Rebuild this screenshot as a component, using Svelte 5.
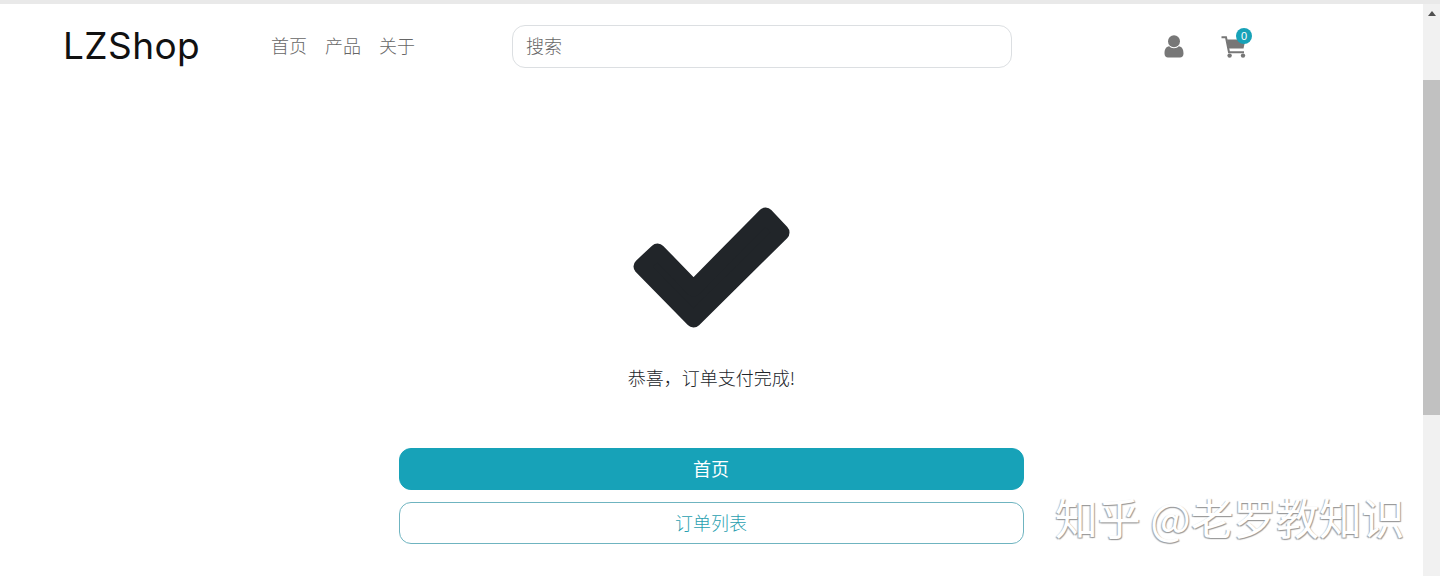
<script>
	const links = ['首页', '产品', '关于'];
	let cartCount = 0;
</script>

<div class="window">
	<div class="topline"></div>
	<div class="frame">
		<div class="page">
			<header>
				<div class="logo">LZShop</div>
				<nav>
					{#each links as link}
						<a href="#top">{link}</a>
					{/each}
				</nav>
				<input class="search" type="text" placeholder="搜索" />
				<div class="icons">
					<svg class="user" viewBox="0 0 20 23" aria-hidden="true">
						<circle cx="10" cy="6.2" r="6" />
						<path d="M0.5 18.5C0.5 14 2 11.7 5.2 11.2 7 13.8 13 13.8 14.8 11.2 18 11.7 19.5 14 19.5 18.5 19.5 21.3 18 22.5 16 22.5H4C2 22.5 0.5 21.3 0.5 18.5Z" />
					</svg>
					<div class="cart">
						<svg viewBox="0 0 26 23" aria-hidden="true">
							<path class="handle" d="M0.5 2.2H5L8 17.2H23" />
							<path d="M6 4.5H24.5L22.5 13.5H7.6Z" />
							<circle cx="8.6" cy="20.6" r="2.2" />
							<circle cx="22" cy="20.6" r="2.2" />
						</svg>
						<span class="badge">{cartCount}</span>
					</div>
				</div>
			</header>

			<main>
				<svg class="check" viewBox="0 0 162 162" aria-hidden="true">
					<path d="M62.5 132.5L150.5 45.5 134.5 28.5 62.5 101.5 26.5 64.5 10.5 79.5Z" />
				</svg>
				<p>恭喜，订单支付完成!</p>
				<button class="primary">首页</button>
				<button class="outline">订单列表</button>
			</main>

			<div class="watermark">知乎 @老罗教知识</div>
		</div>

		<div class="scrollbar">
			<div class="arrow"></div>
			<div class="thumb"></div>
		</div>
	</div>
</div>

<style>
	:global(body) {
		overflow: hidden;
		background: #fff;
	}

	.window {
		height: 576px;
		display: flex;
		flex-direction: column;
		font-family: "Noto Sans CJK SC", "Liberation Sans", sans-serif;
		color: #212529;
	}

	.topline {
		height: 4px;
		background: #e9e9e9;
		flex: none;
	}

	.frame {
		flex: 1;
		display: flex;
		min-height: 0;
	}

	.page {
		flex: 1;
		position: relative;
		min-width: 0;
	}

	header {
		display: flex;
		align-items: center;
		height: 85px;
		padding-left: 63px;
	}

	.logo {
		font-family: "Inter", sans-serif;
		font-size: 37px;
		letter-spacing: 0.4px;
		color: #111;
		width: 208px;
		flex: none;
		padding-bottom: 3px;
	}

	nav {
		display: flex;
		gap: 18px;
		width: 241px;
		flex: none;
		padding-bottom: 4px;
	}

	nav a {
		font-size: 18px;
		font-weight: 300;
		color: #666;
		text-decoration: none;
	}

	.search {
		width: 500px;
		height: 43px;
		box-sizing: border-box;
		border: 1px solid #dcdfe2;
		border-radius: 13px;
		padding: 0 13px 3px;
		font: 300 18px "Noto Sans CJK SC", sans-serif;
		flex: none;
		outline: none;
	}

	.search::placeholder {
		color: #666;
		opacity: 1;
	}

	.icons {
		display: flex;
		align-items: center;
		gap: 37px;
		margin-left: 152px;
		fill: #777;
	}

	.user {
		width: 20px;
		height: 23px;
		display: block;
	}

	.cart {
		position: relative;
		width: 26px;
		height: 23px;
	}

	.cart svg {
		display: block;
		width: 26px;
		height: 23px;
	}

	.handle {
		fill: none;
		stroke: #777;
		stroke-width: 2;
	}

	.badge {
		position: absolute;
		top: -7px;
		left: 15px;
		width: 16px;
		height: 16px;
		border-radius: 50%;
		background: #17a2b8;
		color: #fff;
		font: 11px/16px "Liberation Sans", sans-serif;
		text-align: center;
	}

	main {
		display: flex;
		flex-direction: column;
		align-items: center;
		padding-top: 98px;
	}

	.check {
		width: 162px;
		height: 162px;
		fill: #212529;
		stroke: #212529;
		stroke-width: 16;
		stroke-linejoin: round;
		display: block;
	}

	p {
		margin: 15px 0 57px;
		font-size: 18px;
		font-weight: 300;
		line-height: 27px;
	}

	button {
		width: 625px;
		height: 42px;
		box-sizing: border-box;
		border-radius: 12px;
		font: 400 18px "Noto Sans CJK SC", sans-serif;
		padding: 0 1px 3px 0;
	}

	.primary {
		background: #17a2b8;
		border: 1px solid #17a2b8;
		color: #fff;
		margin-bottom: 12px;
	}

	.outline {
		background: #fff;
		border: 1px solid #6fb4c0;
		color: #2a9fb0;
		font-weight: 300;
	}

	.watermark {
		position: absolute;
		left: 1055px;
		top: 485px;
		font-size: 42.8px;
		line-height: 54px;
		font-weight: 400;
		white-space: nowrap;
		color: #fff;
		text-shadow: 1px 1px 1px #999, -1px 1px 1px #aaa;
	}

	.scrollbar {
		width: 17px;
		flex: none;
		background: #f1f1f1;
		display: flex;
		flex-direction: column;
	}

	.arrow {
		height: 76px;
		display: flex;
		justify-content: center;
		padding-top: 7px;
		box-sizing: border-box;
	}

	.arrow::before {
		content: "";
		width: 0;
		height: 0;
		border-left: 4px solid transparent;
		border-right: 4px solid transparent;
		border-bottom: 5px solid #505050;
	}

	.thumb {
		height: 335px;
		background: #c1c1c1;
	}
</style>
